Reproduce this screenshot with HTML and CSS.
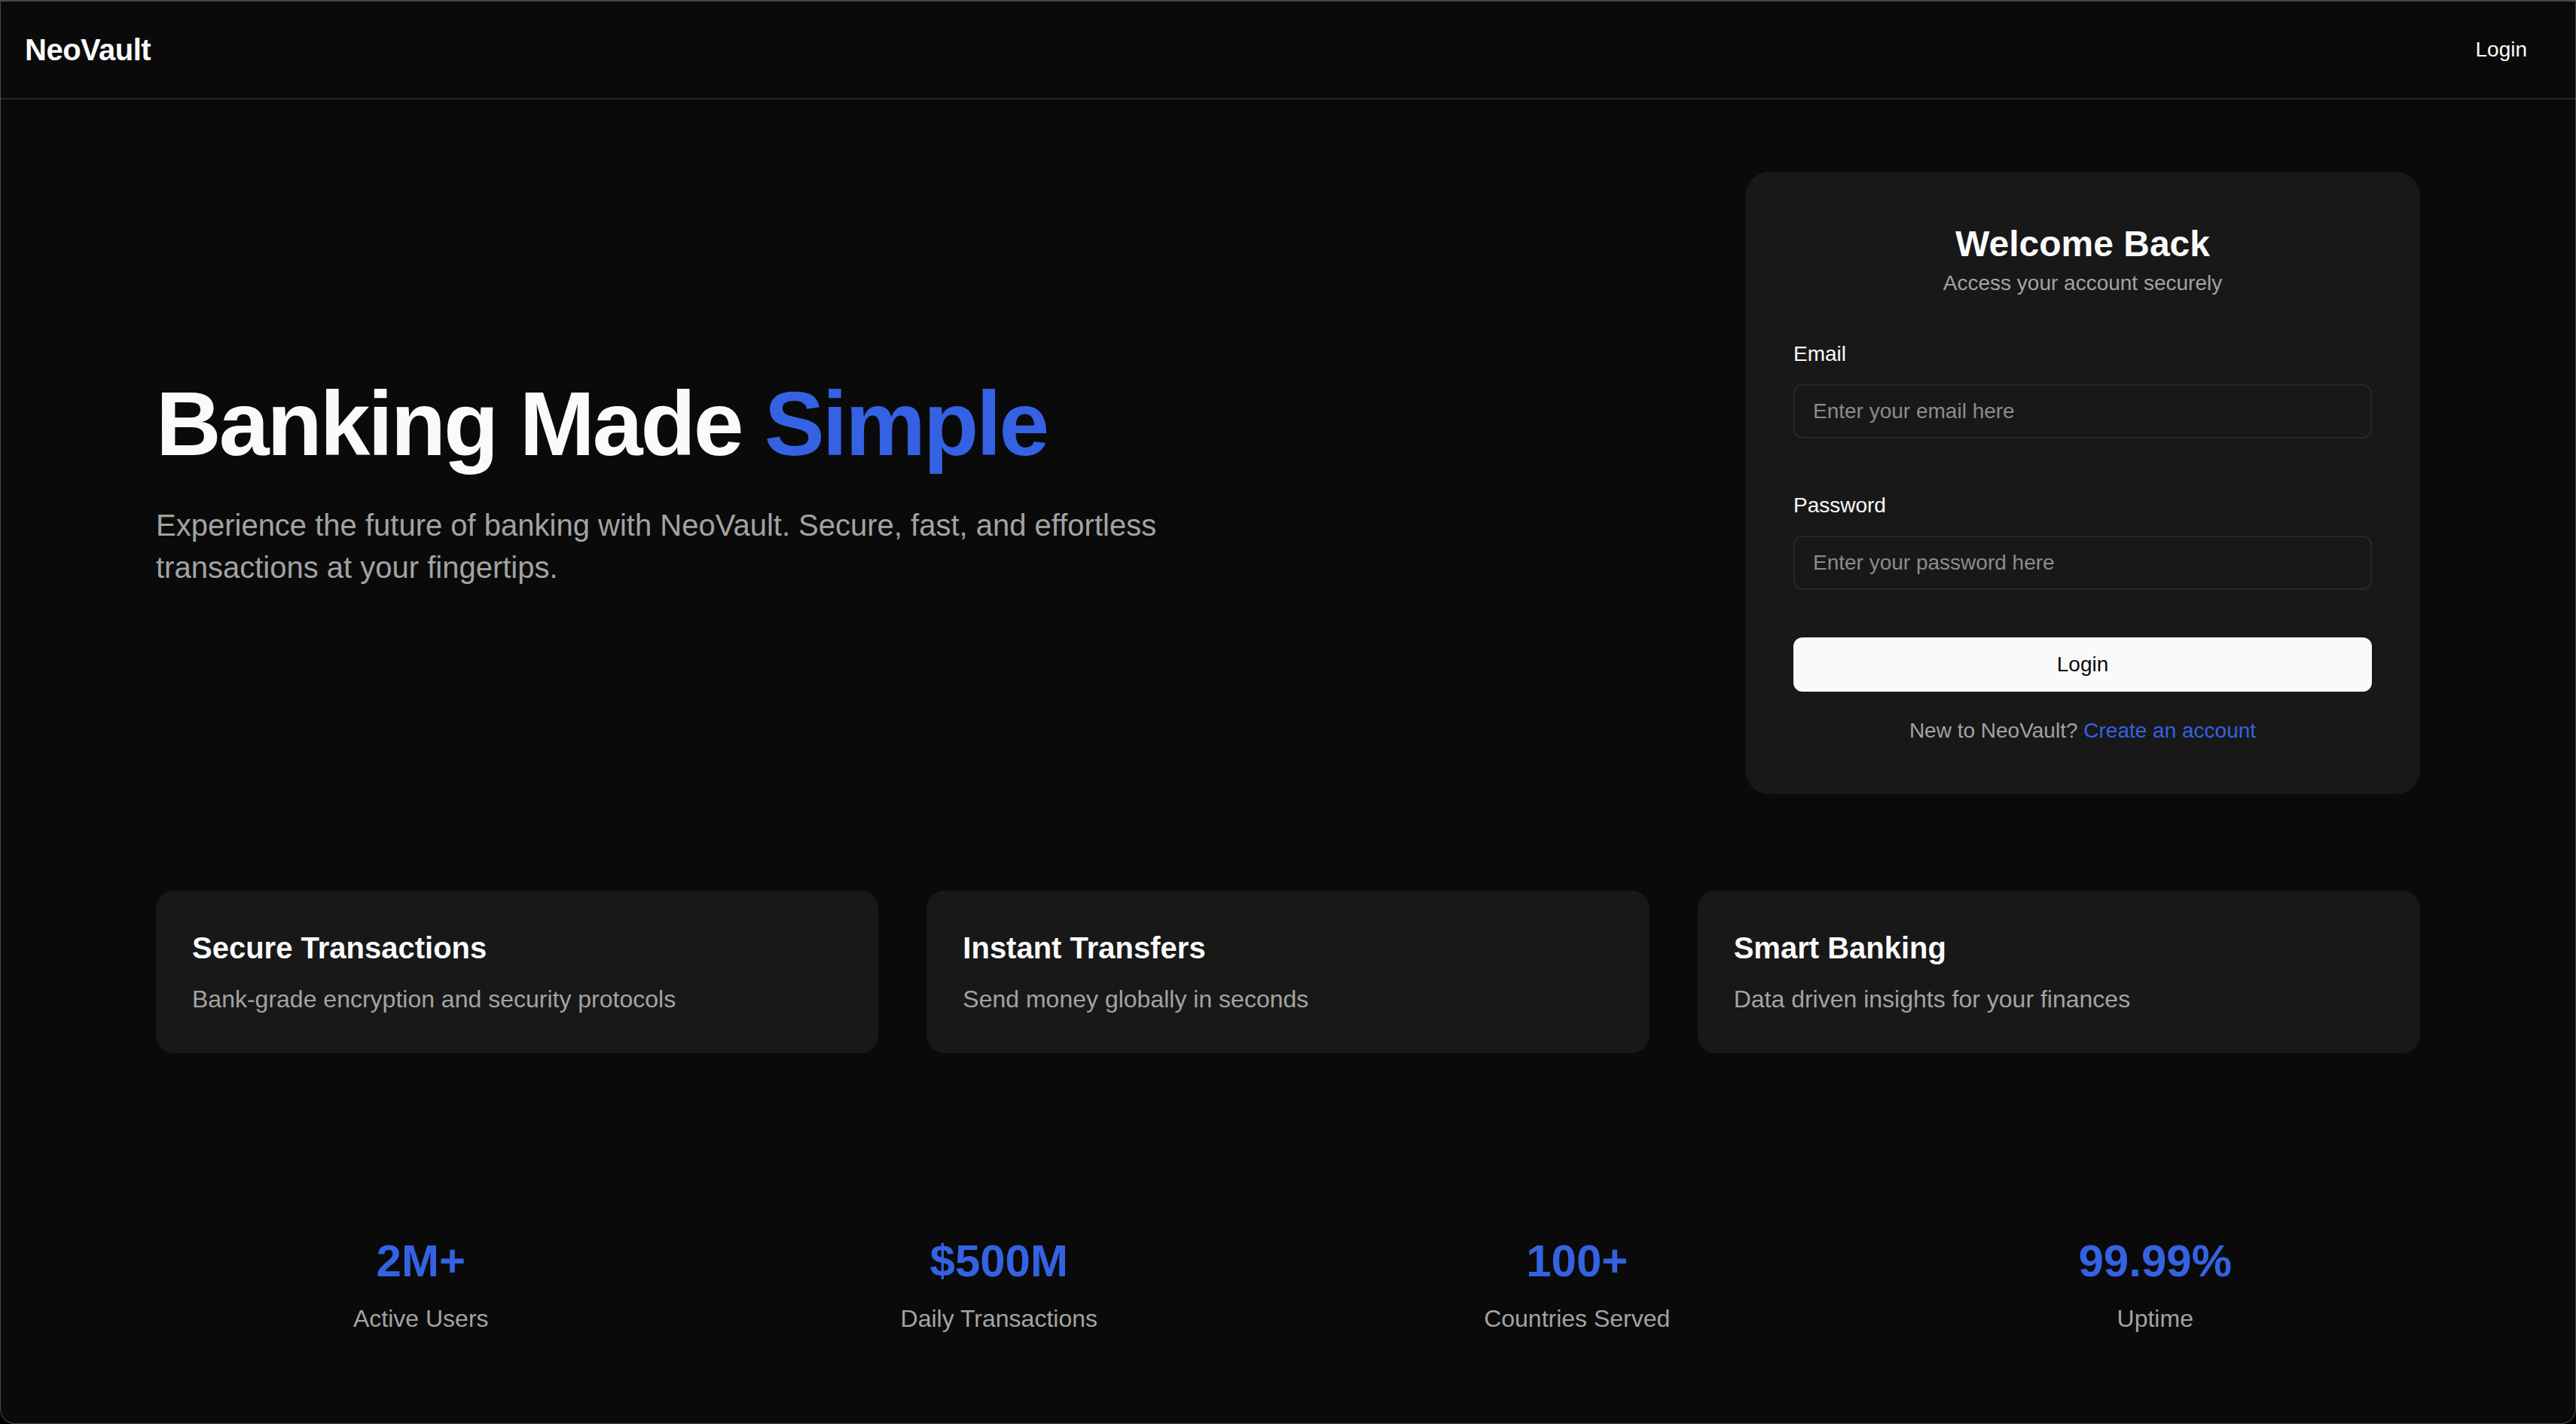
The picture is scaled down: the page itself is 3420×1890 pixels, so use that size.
FILE: index.html
```html
<!DOCTYPE html>
<html lang="en">
<head>
<meta charset="utf-8">
<title>NeoVault</title>
<link rel="stylesheet" href="styles.css">
</head>
<body>
<div class="frame">
  <nav class="nav">
    <div class="brand">NeoVault</div>
    <a class="nav-login" href="#">Login</a>
  </nav>
  <main class="container">
    <section class="hero">
      <div class="hero-text">
        <h1 class="hero-title">Banking Made <span class="accent">Simple</span></h1>
        <p class="hero-sub">Experience the future of banking with NeoVault. Secure, fast, and effortless transactions at your fingertips.</p>
      </div>
      <div class="login-card">
        <h2 class="card-title">Welcome Back</h2>
        <p class="card-sub">Access your account securely</p>
        <form class="login-form">
          <div class="field">
            <label class="field-label" for="email">Email</label>
            <input class="field-input" id="email" type="email" placeholder="Enter your email here">
          </div>
          <div class="field field-last">
            <label class="field-label" for="password">Password</label>
            <input class="field-input" id="password" type="password" placeholder="Enter your password here">
          </div>
          <button class="submit" type="button">Login</button>
          <p class="signup">New to NeoVault? <a class="signup-link" href="#">Create an account</a></p>
        </form>
      </div>
    </section>
    <section class="features">
      <div class="feature">
        <h3 class="feature-title">Secure Transactions</h3>
        <p class="feature-text">Bank-grade encryption and security protocols</p>
      </div>
      <div class="feature">
        <h3 class="feature-title">Instant Transfers</h3>
        <p class="feature-text">Send money globally in seconds</p>
      </div>
      <div class="feature">
        <h3 class="feature-title">Smart Banking</h3>
        <p class="feature-text">Data driven insights for your finances</p>
      </div>
    </section>
    <section class="stats">
      <div class="stat">
        <div class="stat-value">2M+</div>
        <div class="stat-label">Active Users</div>
      </div>
      <div class="stat">
        <div class="stat-value">$500M</div>
        <div class="stat-label">Daily Transactions</div>
      </div>
      <div class="stat">
        <div class="stat-value">100+</div>
        <div class="stat-label">Countries Served</div>
      </div>
      <div class="stat">
        <div class="stat-value">99.99%</div>
        <div class="stat-label">Uptime</div>
      </div>
    </section>
  </main>
</div>
</body>
</html>
```

FILE: styles.css
```css
* { box-sizing: border-box; }

html, body {
  margin: 0;
  padding: 0;
  background: #000;
}

body {
  font-family: "Liberation Sans", Arial, Helvetica, sans-serif;
  color: #fafafa;
}

.frame {
  height: 1890px;
  background: #0a0a0a;
  border-top: 2px solid #45484b;
  border-left: 1px solid #4a4a4a;
  border-right: 1px solid #4a4a4a;
  border-bottom: 1px solid #4a4a4a;
  border-radius: 0 0 20px 20px;
  overflow: hidden;
}

.nav {
  height: 130px;
  border-bottom: 2px solid #262626;
  display: flex;
  align-items: center;
  justify-content: space-between;
  padding: 0 32px;
}

.brand {
  font-size: 40px;
  font-weight: 700;
  letter-spacing: -0.5px;
}

.nav-login {
  color: #fafafa;
  text-decoration: none;
  font-size: 28px;
  padding: 8px 32px;
}

.container {
  width: 3006px;
  margin: 0 auto;
}

.hero {
  display: flex;
  justify-content: space-between;
  align-items: center;
  padding-top: 96px;
}

.hero-title {
  margin: 0;
  font-size: 120px;
  line-height: 120px;
  font-weight: 700;
  letter-spacing: -3px;
}

.accent { color: #3462e3; }

.hero-sub {
  margin: 47px 0 0;
  max-width: 1344px;
  font-size: 40px;
  line-height: 56px;
  color: #a3a3a3;
}

.login-card {
  width: 896px;
  background: #181818;
  border-radius: 32px;
  padding: 64px;
}

.card-title {
  margin: 0;
  text-align: center;
  font-size: 48px;
  line-height: 64px;
  font-weight: 700;
}

.card-sub {
  margin: 0;
  text-align: center;
  font-size: 28px;
  line-height: 40px;
  color: #a3a3a3;
}

.login-form { margin-top: 54px; }

.field { margin-bottom: 69px; }
.field-last { margin-bottom: 63px; }

.field-label {
  display: block;
  font-size: 28px;
  line-height: 40px;
  color: #fafafa;
  margin-bottom: 20px;
}

.field-input {
  display: block;
  width: 100%;
  height: 72px;
  padding: 0 24px;
  background: #181818;
  border: 2px solid #282828;
  border-radius: 12px;
  color: #fafafa;
  font-family: inherit;
  font-size: 28px;
  outline: none;
}

.field-input::placeholder { color: #8c8c8c; }

.submit {
  display: block;
  width: 100%;
  height: 72px;
  border: none;
  border-radius: 12px;
  background: #fafafa;
  color: #0a0a0a;
  font-family: inherit;
  font-size: 28px;
}

.signup {
  margin: 32px 0 0;
  text-align: center;
  font-size: 28px;
  line-height: 40px;
  color: #a3a3a3;
}

.signup-link {
  color: #3462e3;
  text-decoration: none;
}

.features {
  margin-top: 128px;
  display: grid;
  grid-template-columns: repeat(3, 1fr);
  gap: 64px;
}

.feature {
  background: #181818;
  border-radius: 24px;
  padding: 48px;
}

.feature-title {
  margin: 0;
  font-size: 40px;
  line-height: 56px;
  font-weight: 700;
}

.feature-text {
  margin: 16px 0 0;
  font-size: 32px;
  line-height: 48px;
  color: #a3a3a3;
}

.stats {
  margin-top: 240px;
  display: grid;
  grid-template-columns: repeat(4, 1fr);
  gap: 64px;
  text-align: center;
}

.stat-value {
  font-size: 60px;
  line-height: 72px;
  font-weight: 700;
  color: #3462e3;
}

.stat-label {
  margin-top: 16px;
  font-size: 32px;
  line-height: 48px;
  color: #a3a3a3;
}
```
